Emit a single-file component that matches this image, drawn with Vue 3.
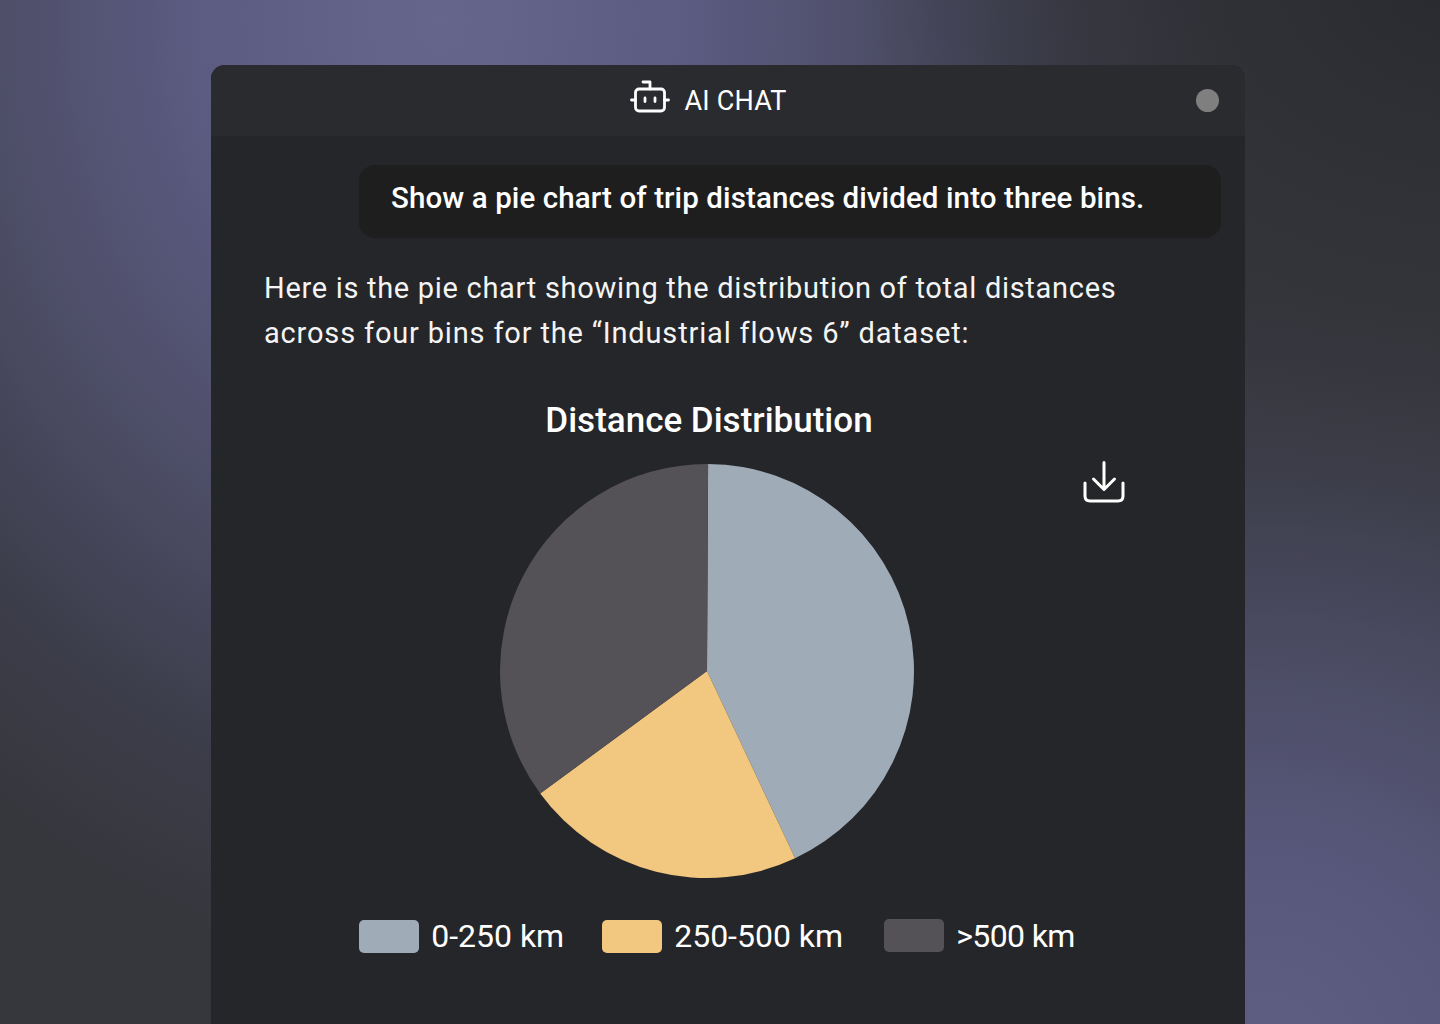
<template>
  <div class="page">
    <div class="panel">
      <!-- header -->
      <div class="head">
        <div class="title">
          <svg class="bot" width="40" height="36" viewBox="0 0 40 36" fill="none" stroke="#fff" stroke-width="2.8" stroke-linecap="round" stroke-linejoin="round">
            <path d="M13 2H20V9" />
            <rect x="5.500" y="9" width="29" height="22" rx="3.500" />
            <path d="M1.500 20H5.500M34.500 20H38.500" />
            <path d="M15 18V21.500M25 18V21.500" />
          </svg>
          <span>AI CHAT</span>
        </div>
        <div class="dot"></div>
      </div>

      <div class="body">
        <div class="question">Show a pie chart of trip distances divided into three bins.</div>
        <p class="answer">
          <span>Here is the pie chart showing the distribution of total distances</span>
          <span class="second">across four bins for the “Industrial flows 6” dataset:</span>
        </p>

        <div class="chart">
          <h3>Distance Distribution</h3>
          <svg class="pie" width="416" height="416" viewBox="0 0 416 416">
            <path v-for="s in slices" :key="s.label" :d="s.d" :fill="s.color" />
          </svg>
          <svg class="download" width="42" height="42" viewBox="0 0 42 42" fill="none" stroke="#fff" stroke-width="3" stroke-linecap="round" stroke-linejoin="round">
            <path d="M21 1.500V28M10.500 18L21 28.500L31.500 18" />
            <path d="M2 22V35Q2 40 7 40H35Q40 40 40 35V22" />
          </svg>
          <div class="legend">
            <div v-for="s in slices" :key="s.label" class="legend-item" :class="s.cls">
              <i :style="{ background: s.color }"></i>
              <span>{{ s.label }}</span>
            </div>
          </div>
        </div>
      </div>
    </div>
  </div>
</template>

<script setup>
// pie centre and radius inside the svg
const cx = 207
const cy = 208
const r = 207

const point = (deg) => {
  const a = (deg - 90) * Math.PI / 180
  return `${cx + r * Math.cos(a)} ${cy + r * Math.sin(a)}`
}
const arc = (from, to) => {
  const large = to - from > 180 ? 1 : 0
  return `M${cx} ${cy}L${point(from)}A${r} ${r} 0 ${large} 1 ${point(to)}Z`
}

const slices = [
  { label: '0-250 km', color: '#a0abb8', d: arc(0.3, 154.8) },
  { label: '250-500 km', color: '#f2c77f', d: arc(154.8, 233.7) },
  { label: '>500 km', color: '#545257', d: arc(233.7, 360.3), cls: 'last' }
]
</script>

<style>
html, body { background: #36373c; }
</style>

<style scoped>
.page {
  height: 1024px;
  overflow: hidden;
  padding: 65px 195px 0 211px;
  box-sizing: border-box;
  font-family: Roboto, "Noto Sans", sans-serif;
  color: #fff;
  background:
    radial-gradient(ellipse 640px 480px at 1480px -30px, rgba(40,41,46,0.95) 0%, rgba(46,47,52,0.6) 50%, rgba(54,55,60,0) 100%),
    radial-gradient(ellipse 800px 960px at 440px 20px, #66658c 0%, #5c5b82 30%, rgba(84,84,116,0.8) 55%, rgba(68,68,92,0.4) 82%, rgba(54,55,60,0) 100%),
    radial-gradient(ellipse 820px 760px at 1260px 1050px, #5e5d82 0%, #58587c 25%, rgba(82,82,112,0.8) 50%, rgba(66,66,85,0.4) 80%, rgba(54,55,60,0) 100%),
    #36373c;
}
.panel {
  height: 959px;
  background: #252629;
  border-radius: 14px 14px 0 0;
  overflow: hidden;
}

.head {
  height: 71px;
  background: #2a2b2f;
  display: flex;
  align-items: center;
  justify-content: center;
  position: relative;
}
.title {
  display: flex;
  align-items: center;
  gap: 14px;
  font-size: 27px;
  letter-spacing: 0.2px;
  margin-left: -39px;
}
.bot { margin-top: -6px; }
.dot {
  position: absolute;
  right: 26px;
  top: 24px;
  width: 23px;
  height: 23px;
  border-radius: 50%;
  background: #7f7f7f;
}

.body { padding: 29px 24px 0 53px; }
.question {
  margin-left: 95px;
  height: 73px;
  box-sizing: border-box;
  padding: 0 32px 8px;
  display: flex;
  align-items: center;
  background: #1e1e1f;
  border-radius: 16px;
  font-size: 29.5px;
  font-weight: 500;
  letter-spacing: 0.1px;
}
.answer {
  margin: 28px 0 0;
  font-size: 29px;
  line-height: 45px;
  letter-spacing: 0.7px;
  color: #f4f4f4;
}
.answer span { display: block; }
.answer .second { letter-spacing: 0.83px; }

.chart {
  position: relative;
  margin-top: 43px;
  margin-left: -53px;
  margin-right: -24px;
  display: flex;
  flex-direction: column;
  align-items: center;
}
.chart h3 {
  margin: 0;
  font-size: 35px;
  font-weight: 500;
  line-height: 44px;
  text-align: center;
  transform: translateX(-19px);
}
.pie {
  margin-top: 20px;
  transform: translateX(-20px);
}
.download {
  position: absolute;
  left: 872px;
  top: 62px;
}
.legend {
  display: flex;
  gap: 38px;
  margin-top: 38px;
  transform: translateX(-11px);
}
.legend-item {
  display: flex;
  align-items: center;
  gap: 12px;
  font-size: 32px;
}
.legend-item.last {
  margin-top: -1px;
  margin-left: 3px;
  letter-spacing: -0.6px;
}
.legend-item i {
  width: 60px;
  height: 33px;
  border-radius: 5px;
}
</style>
